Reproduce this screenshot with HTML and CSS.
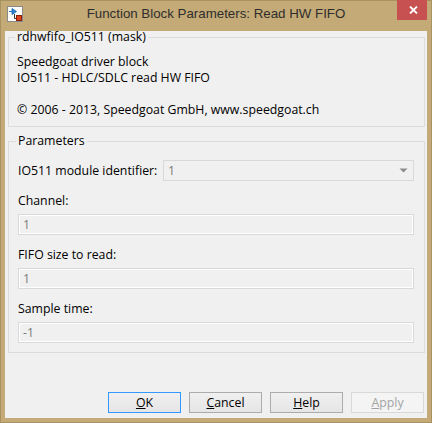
FILE: index.html
```html
<!DOCTYPE html>
<html>
<head>
<meta charset="utf-8">
<link rel="stylesheet" href="styles.css">
</head>
<body>
<div class="window">
  <div class="titlebar">
    <div class="icon-cell">
      <svg class="app-icon" width="16" height="16" viewBox="0 0 16 16">
        <rect x="0.5" y="0.5" width="15" height="15" fill="#fdfdfd" stroke="#8a8a8a"/>
        <path d="M2 5.5H5" stroke="#1f6fc4" stroke-width="1"/>
        <path d="M5 2.5L9.5 5.5L5 8.5Z" fill="#2f86d8" stroke="#1a5ea8" stroke-width="0.8"/>
        <path d="M7.5 8V12.5H9" stroke="#333" stroke-width="1" fill="none"/>
        <rect x="9.5" y="9.5" width="5" height="5" fill="#e0401a" stroke="#8a1f0a"/>
      </svg>
    </div>
    <div class="title">Function Block Parameters: Read HW FIFO</div>
    <div class="close-cell">
      <div class="close">
        <svg width="9" height="8" viewBox="0 0 9 8"><path d="M1 0.5L8 7.5M8 0.5L1 7.5" stroke="#fff" stroke-width="1.8"/></svg>
      </div>
    </div>
  </div>
  <div class="client">
    <fieldset class="group mask">
      <legend>rdhwfifo_IO511 (mask)</legend>
      <p class="desc">Speedgoat driver block<br>IO511 - HDLC/SDLC read HW FIFO<br><br>© 2006 - 2013, Speedgoat GmbH, www.speedgoat.ch</p>
    </fieldset>
    <fieldset class="group params">
      <legend>Parameters</legend>
      <div class="row-inline">
        <span class="label inline">IO511 module identifier:</span>
        <div class="combo"><span>1</span>
          <svg class="arrow" width="9" height="6" viewBox="0 0 9 6"><path d="M0.5 0.5H8.5L4.5 4.5Z" fill="#8c8c8c"/><path d="M4.5 5.5H5.5" stroke="#fff"/></svg>
        </div>
      </div>
      <div class="field">
        <div class="label">Channel:</div>
        <div class="input">1</div>
      </div>
      <div class="field">
        <div class="label">FIFO size to read:</div>
        <div class="input">1</div>
      </div>
      <div class="field">
        <div class="label">Sample time:</div>
        <div class="input">-1</div>
      </div>
    </fieldset>
    <div class="buttons">
      <div class="btn default"><u>O</u>K</div>
      <div class="btn"><u>C</u>ancel</div>
      <div class="btn"><u>H</u>elp</div>
      <div class="btn disabled"><u>A</u>pply</div>
    </div>
  </div>
</div>
</body>
</html>
```

FILE: styles.css
```css
* { box-sizing: border-box; }
html, body { margin: 0; padding: 0; }
body {
  width: 432px;
  height: 423px;
  font-family: "Open Sans", "Liberation Sans", Arial, sans-serif;
  font-size: 12.3px;
  color: #000;
  background: #c4aa76;
}
.window {
  width: 432px;
  height: 423px;
  background: #c4aa76;
  box-shadow: inset 0 0 0 1px #a8925f;
  display: flex;
  flex-direction: column;
}
.titlebar {
  height: 31px;
  flex: 0 0 31px;
  display: grid;
  grid-template-columns: 35px 1fr 35px;
}
.icon-cell { padding: 6px 0 0 7px; }
.app-icon { display: block; }
.title {
  text-align: center;
  font-family: "Liberation Sans", Arial, sans-serif;
  font-size: 13.3px;
  line-height: 18px;
  padding-top: 5px;
  color: #2e2e2e;
  white-space: nowrap;
}
.close-cell { display: flex; justify-content: flex-end; }
.close {
  width: 30px;
  height: 20px;
  margin-right: 5px;
  background: #c75050;
  display: flex;
  align-items: center;
  justify-content: center;
  padding-left: 3px;
}
.close svg { display: block; }
.client {
  flex: 1;
  margin: 0 5px 5px 5px;
  background: #f0f0f0;
  display: flex;
  flex-direction: column;
}
.group {
  border: 1px solid #dcdcdc;
  margin: 0 2px 0 3px;
  min-width: 0;
}
.group legend {
  font-size: 12.3px;
  line-height: 12px;
  padding: 0 2px;
  margin-left: -2px;
}
.mask { padding: 11px 8px 8px 8px; }
.desc { margin: 0; line-height: 16px; }
.params { margin-top: 8px; padding: 13px 10px 9px 9px; }
.row-inline {
  display: flex;
  align-items: center;
  height: 21px;
}
.label.inline { flex: 0 0 145px; white-space: nowrap; }
.label { line-height: 16px; }
.combo {
  flex: 1;
  height: 21px;
  border: 1px solid #d9d9d9;
  background: #f0f0f0;
  color: #7a7a7a;
  display: flex;
  align-items: center;
  justify-content: space-between;
  padding: 0 5px 0 4px;
}
.combo .arrow { display: block; margin-top: 1px; }
.field { margin-top: 12px; }
.field .label { margin-bottom: 5px; }
.input {
  height: 21px;
  border: 1px solid #d9d9d9;
  box-shadow: inset 0 0 0 1px #fff;
  background: #f0f0f0;
  color: #7a7a7a;
  line-height: 19px;
  padding-left: 4px;
}
.buttons {
  margin-top: auto;
  display: flex;
  justify-content: flex-end;
  gap: 8px;
  padding: 0 3px 5px 0;
}
.btn {
  width: 73px;
  height: 21px;
  border: 1px solid #acacac;
  background: linear-gradient(#f0f0f0, #e5e5e5);
  text-align: center;
  line-height: 19px;
}
.btn.default { border-color: #3399ff; }
.btn.disabled {
  border-color: #d9d9d9;
  background: #f4f4f4;
  color: #a3a3a3;
}
.btn u { text-underline-offset: 1px; }
```
